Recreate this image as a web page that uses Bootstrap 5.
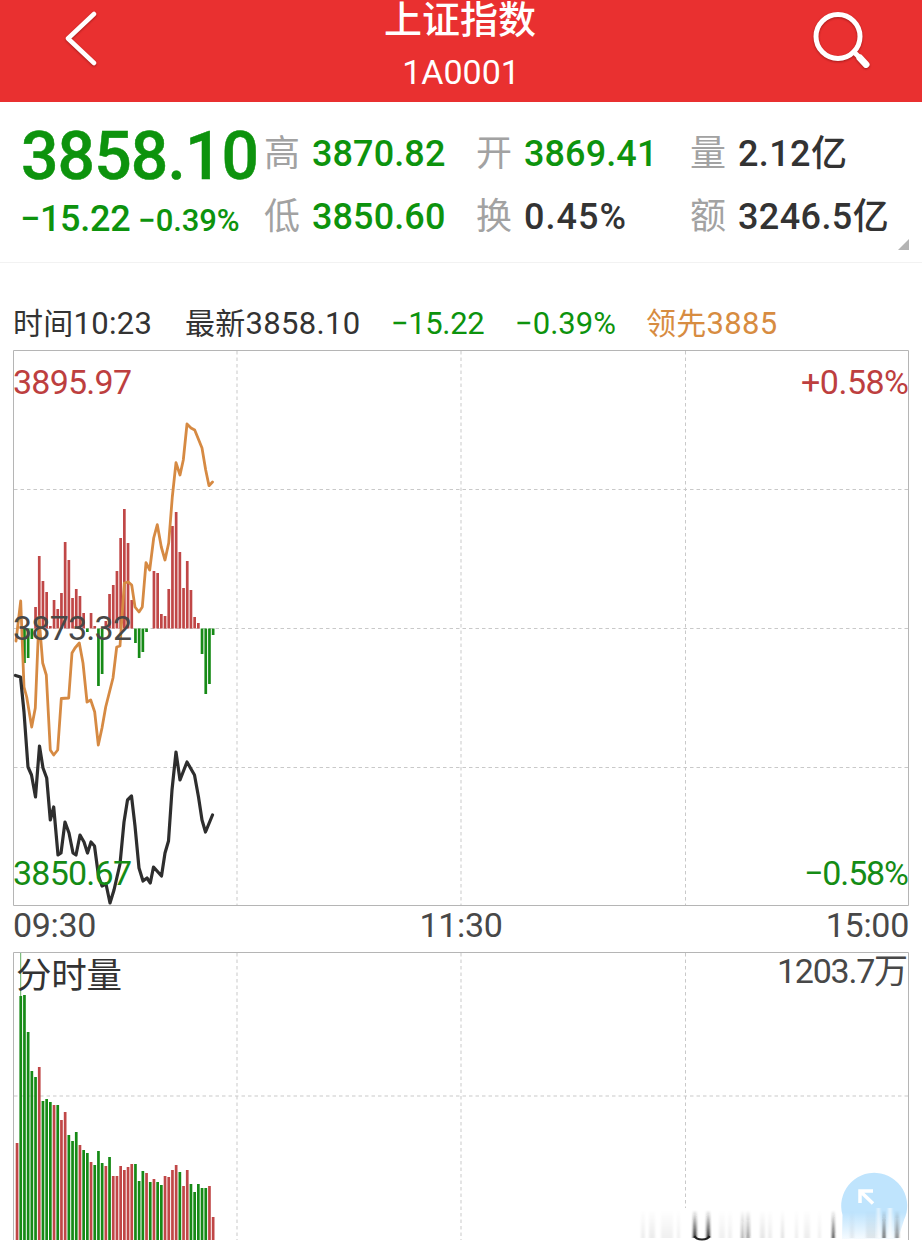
<!DOCTYPE html>
<html lang="zh-CN">
<head>
<meta charset="utf-8">
<meta name="viewport" content="width=device-width, initial-scale=1">
<title>上证指数 1A0001</title>
<link href="https://cdn.jsdelivr.net/npm/bootstrap@5.3.0/dist/css/bootstrap.min.css" rel="stylesheet">
<style>
  body{font-family:Roboto,"Noto Sans CJK SC",sans-serif;color:#333;background:#fff;width:922px;height:1260px;overflow:hidden}
  .topbar{height:102px;background:#e93030;color:#fff}
  .topbar svg{filter:drop-shadow(0 1px 1px rgba(80,0,0,.45))}
  .idx-name{font-size:38px;line-height:40px;font-weight:500;margin-left:-2px}
  .idx-code{font-size:34px;line-height:36px;margin-top:14px}
  .quote{height:161px;border-bottom:1px solid #f2f2f2;padding:20px 0 0 21px}
  .main-col{width:243px}
  .c2{width:212px}.c3{width:214px}.c4{width:210px}
  .price{font-size:66px;line-height:70px;font-weight:500;letter-spacing:-.9px;-webkit-text-stroke:.5px #0d930d}
  .chg{font-size:36px;line-height:40px;font-weight:500;margin-top:7px;margin-left:-1px;letter-spacing:-.3px}
  .pct{font-size:31px;letter-spacing:-.1px}
  .fall{color:#0d930d}
  .stat{height:63px;line-height:64px;font-size:36px;font-weight:500}
  .stat .lbl{width:48px;color:#a2a2a2;font-weight:400;font-size:36px}
  .stat .val{letter-spacing:.1px}
  .c4 .val{letter-spacing:.4px}
  .c3 .val.turn{letter-spacing:1px}
  .corner{right:12px;top:136px}
  .info{height:87px;padding:41px 0 0 13px;font-size:31px;line-height:40px;white-space:nowrap;letter-spacing:.3px}
  .info .cj{font-size:30px}
  .info .lead-price{color:#d78c41}
  .chart text{font-size:34px}
  .axis{height:46px;padding:0 13px;font-size:34px;line-height:38px;color:#484848;letter-spacing:-.3px}
</style>
</head>
<body>
<header class="topbar d-flex justify-content-between">
  <svg width="150" height="102" fill="none" stroke="#fff" stroke-width="4.5" stroke-linecap="round" stroke-linejoin="round"><path d="M94 14 68 38.500 94 63"/></svg>
  <div class="text-center">
    <div class="idx-name">上证指数</div>
    <div class="idx-code">1A0001</div>
  </div>
  <svg width="150" height="102" fill="none" stroke="#fff" stroke-linecap="round"><circle cx="66" cy="36.500" r="22" stroke-width="5"/><path d="M82 52 88 58" stroke-width="5"/><path d="M88 58 94 64.500" stroke-width="7"/></svg>
</header>

<section class="quote d-flex position-relative">
  <div class="main-col fall">
    <div class="price">3858.10</div>
    <div class="chg text-nowrap d-flex gap-2 align-items-baseline"><span>−15.22</span><span class="pct">−0.39%</span></div>
  </div>
  <div class="c2">
    <div class="stat d-flex"><span class="lbl">高</span><span class="val fall">3870.82</span></div>
    <div class="stat d-flex"><span class="lbl">低</span><span class="val fall">3850.60</span></div>
  </div>
  <div class="c3">
    <div class="stat d-flex"><span class="lbl">开</span><span class="val fall">3869.41</span></div>
    <div class="stat d-flex"><span class="lbl">换</span><span class="val turn">0.45%</span></div>
  </div>
  <div class="c4 text-nowrap">
    <div class="stat d-flex"><span class="lbl">量</span><span class="val">2.12亿</span></div>
    <div class="stat d-flex"><span class="lbl">额</span><span class="val">3246.5亿</span></div>
  </div>
  <svg class="corner position-absolute" width="12" height="13"><path d="M11 1V12H0Z" fill="#b4b4b4"/></svg>
</section>

<div class="info d-flex">
  <span style="width:172px"><span class="cj">时间</span>10:23</span>
  <span style="width:206px"><span class="cj">最新</span>3858.10</span>
  <span class="fall" style="width:124px;letter-spacing:-.4px">−15.22</span>
  <span class="fall" style="width:131px;letter-spacing:0">−0.39%</span>
  <span class="lead-price"><span class="cj">领先</span>3885</span>
</div>

<svg class="chart d-block" width="922" height="556" viewBox="0 350 922 556">
  <g fill="none" stroke="#c9c9c9" stroke-dasharray="3.500 3">
    <path d="M237 351V905M461 351V905M685.500 351V905M14 489.500H908M14 628.500H908M14 767.500H908"/>
  </g>
  <path d="M13.500 350.500H908.500V905.500H13.500Z" fill="none" stroke="#b5b5b5"/>
  <g id="strength"></g>
  <g fill="none" stroke-linejoin="round" stroke-linecap="round">
    <path stroke="#d68a43" stroke-width="2.800" d="M16 641 20.700 601 24 687 26.700 697 31.700 727 35.300 708 39 617 42.700 663 46.300 675 50.300 750 53.700 755 57.700 750 61.300 698.500 68.700 698 72 653 75 648 79.300 643 83 663 87 702 90.700 700 94.700 712 98.300 745 102 728 105.700 707 113 678 116.700 647 120 646 124.300 583 128.300 582 131.700 585 135 607 139 612 142.300 607 146 562.700 149.700 570 153.700 538 157.300 524.700 161.300 547 165 560 168.700 543 172.300 497 176 462.700 180 475 183.300 460 187 424 191 428 194.700 430 202 448 205.700 470 209 485.700 212.500 482"/>
    <path stroke="#2e2e2e" stroke-width="3.200" d="M15.500 675.500 20.500 677 24 712 28 767 31.500 775 35.500 797 39.500 746 43 768 46.700 778 50.300 820 53.700 807 58 855 61 853 65 822 69 833 73 853 76 855 80 835 84 842 87.500 853 91 842 94.500 846 98.500 876 102 886 106 884 110 903 114 890 120 864 124 822 127.500 800 131.500 796 135 826 139 868 143 881 147 878 150.300 883 153.500 867 161.500 876 165 853 168.500 841 172 790 176 752 180 780 187 762 194.500 775 198.500 797 202 820 205.500 832 212.500 815"/>
  </g>
  <text x="13" y="394" fill="#bd3f3f" textLength="119">3895.97</text>
  <text x="909" y="394" fill="#bd3f3f" text-anchor="end" textLength="108">+0.58%</text>
  <text x="13" y="640" fill="#484848" textLength="119">3873.32</text>
  <text x="13" y="885" fill="#158c15" textLength="119">3850.67</text>
  <text x="909" y="885" fill="#158c15" text-anchor="end" textLength="105">−0.58%</text>
</svg>

<div class="axis d-flex justify-content-between"><span>09:30</span><span>11:30</span><span>15:00</span></div>

<svg class="chart d-block" width="922" height="308" viewBox="0 952 922 308">
  <defs>
    <linearGradient id="fade" x1="0" y1="0" x2="0" y2="1"><stop offset="0" stop-color="#222" stop-opacity="0"/><stop offset="1" stop-color="#222"/></linearGradient>
    <linearGradient id="ball" x1="0" y1="0" x2="0" y2="1"><stop offset="0" stop-color="#bfe4fd"/><stop offset=".6" stop-color="#bfe4fd"/><stop offset="1" stop-color="#bfe4fd" stop-opacity=".15"/></linearGradient>
    <filter id="soft" x="-5%" y="-5%" width="110%" height="110%"><feGaussianBlur stdDeviation=".9 0"/></filter>
  </defs>
  <path d="M237 953V1240M461 953V1240M685.500 953V1208M14 1096H908" fill="none" stroke="#c9c9c9" stroke-dasharray="3.500 3"/>
  <path d="M13.500 1240V952.500H908.500V1240" fill="none" stroke="#b5b5b5"/>
  <path d="M20.700 953V996" stroke="#5fae5f" stroke-width="1"/>
  <g id="volume"></g>
  <text x="16" y="988" fill="#333" textLength="106" style="font-size:35.500px">分时量</text>
  <text x="908" y="983" fill="#484848" text-anchor="end" textLength="131">1203.7万</text>
  <path d="M842.500 1215A33 33 0 1 1 904 1220L898 1239H842Z" fill="url(#ball)"/>
  <path d="M860 1203V1191H873M861 1192 873 1203.500" fill="none" stroke="#fff" stroke-width="3.500"/>
  <g id="streaks" filter="url(#soft)"></g>
  <path d="M694.500 1236Q696 1239.500 702 1239.500T709.500 1236" fill="none" stroke="#222" stroke-width="2"/>
</svg>

<script src="https://cdn.jsdelivr.net/npm/bootstrap@5.3.0/dist/js/bootstrap.bundle.min.js"></script>
<script>
  const RED = '#c04747', GREEN = '#168a16', STEP = 3.7, X0 = 15.7;
  const bar = (x, y, w, h, fill, o = 1) => `<rect x="${x.toFixed(1)}" y="${y}" width="${w}" height="${h}" fill="${fill}" opacity="${o}"/>`;

  // minute-by-minute strength, drawn from the zero line
  const zero = 628.5;
  const strength = [0,0,663,658,639,607,556,581,592,626,600,609,593,542,560,598,589,596,613,632,613,626,686,674,621,594,585,571,538,509,543,600,643,658,652,632,0,571,573,614,616,589,526,512,552,588,561,590,617,623,654,694,684,635];
  document.getElementById('strength').innerHTML = strength.map((y, i) => y ? bar(X0 + i * STEP, Math.min(y, zero), 2.7, Math.abs(y - zero), y < zero ? RED : GREEN) : '').join('');

  // minute-by-minute volume
  const volume = [1143,996,995,1032,1071,1077,1067,1101,1099,1102,1105,1105,1120,1112,1135,1141,1132,1145,1150,1153,1162,1165,1151,1163,1166,1157,1176,1176,1166,1170,1167,1164,1164,1181,1171,1173,1182,1179,1182,1185,1176,1177,1170,1165,1172,1186,1170,1184,1192,1184,1188,1188,1186,1217];
  const side = 'rgggggrgggrgrrgggrggrgggrgrrrrrrgggrgrggrrrrgrrgggggrr';
  document.getElementById('volume').innerHTML = volume.map((y, i) => bar(X0 + i * STEP, y, 2.7, 1240 - y, side[i] === 'r' ? RED : GREEN)).join('');

  // fading streaks at the lower edge: x, width, strength
  const streaks = [[641,4,.07],[649,6,.08],[661,12,.06],[677,3,.06],[693,3.5,1],[706.500,3.5,1],[719,6,.06],[728,4,.06],[741,3,.35],[746,4,.4],[760,5,.1],[768,4,.07],[781,3,.12],[795,3,.07],[804,6,.07],[818,3,.06],[832,2.5,.9],[850,4,.06],[866,12,.08],[882.500,3,.7],[895,4,.5]];
  document.getElementById('streaks').innerHTML = streaks.map(([x, w, o]) => bar(x, 1210, w, 28, 'url(#fade)', o)).join('') + bar(877, 1208, 3, 30, '#fff', .55) + bar(888, 1208, 4, 30, '#fff', .6);
</script>
</body>
</html>
